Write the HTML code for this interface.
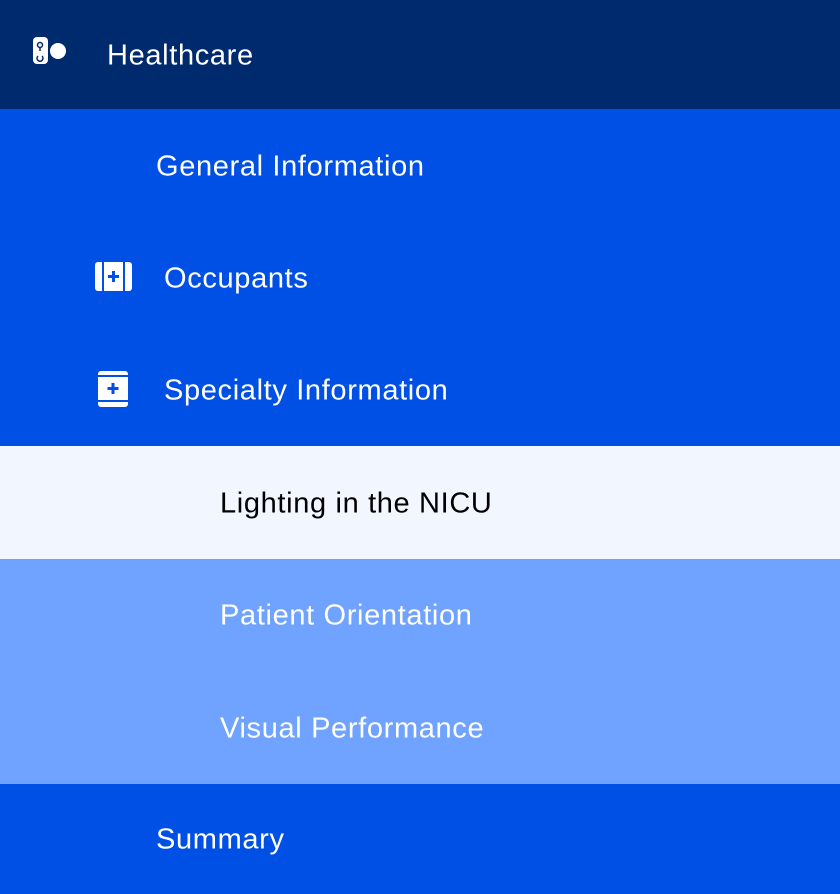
<!DOCTYPE html>
<html><head><style>
body{margin:0;width:840px;height:894px;overflow:hidden;font-family:"Source Sans Pro","Liberation Sans",sans-serif;}
.r{position:absolute;left:0;width:840px;color:#fff;font-size:29px;letter-spacing:0.65px;}
.r span{position:absolute;top:50%;transform:translateY(-47%);white-space:nowrap;}
svg{position:absolute}
</style></head><body>
<div class="r" style="top:0;height:109px;background:#002a6e"><span style="left:107px">Healthcare</span>
<svg style="left:30px;top:34px" width="40" height="34" viewBox="0 0 40 34"><rect x="3" y="3" width="15" height="27" rx="4" fill="#fff"/><circle cx="10" cy="11" r="2.5" fill="none" stroke="#002a6e" stroke-width="1.5"/><path d="M10 14v3M8 22a3 3 0 1 0 4 0" fill="none" stroke="#002a6e" stroke-width="1.5"/><circle cx="28" cy="17" r="8" fill="#fff"/></svg></div>
<div class="r" style="top:109px;height:113px;background:#0050e6"><span style="left:156px">General Information</span></div>
<div class="r" style="top:222px;height:112px;background:#0050e6"><span style="left:164px">Occupants</span>
<svg style="left:95px;top:40px" width="38" height="30" viewBox="0 0 38 30"><rect x="0" y="0" width="37" height="29" rx="3" fill="#fff"/><rect x="7" y="0" width="2" height="29" fill="#0050e6"/><rect x="28" y="0" width="2" height="29" fill="#0050e6"/><path d="M18.5 9v11M13 14.5h11" stroke="#0050e6" stroke-width="3"/></svg></div>
<div class="r" style="top:334px;height:112px;background:#0050e6"><span style="left:164px">Specialty Information</span>
<svg style="left:98px;top:37px" width="31" height="36" viewBox="0 0 31 36"><rect x="0" y="0" width="30" height="36" rx="3" fill="#fff"/><rect x="0" y="4" width="30" height="2" fill="#0050e6"/><rect x="0" y="29" width="30" height="2" fill="#0050e6"/><path d="M15 12v11M9.5 17.5h11" stroke="#0050e6" stroke-width="3"/></svg></div>
<div class="r" style="top:446px;height:113px;background:#f2f6ff;color:#000"><span style="left:220px">Lighting in the NICU</span></div>
<div class="r" style="top:559px;height:112px;background:#70a3ff"><span style="left:220px">Patient Orientation</span></div>
<div class="r" style="top:671px;height:113px;background:#70a3ff"><span style="left:220px">Visual Performance</span></div>
<div class="r" style="top:784px;height:110px;background:#0050e6"><span style="left:156px">Summary</span></div>
</body></html>
